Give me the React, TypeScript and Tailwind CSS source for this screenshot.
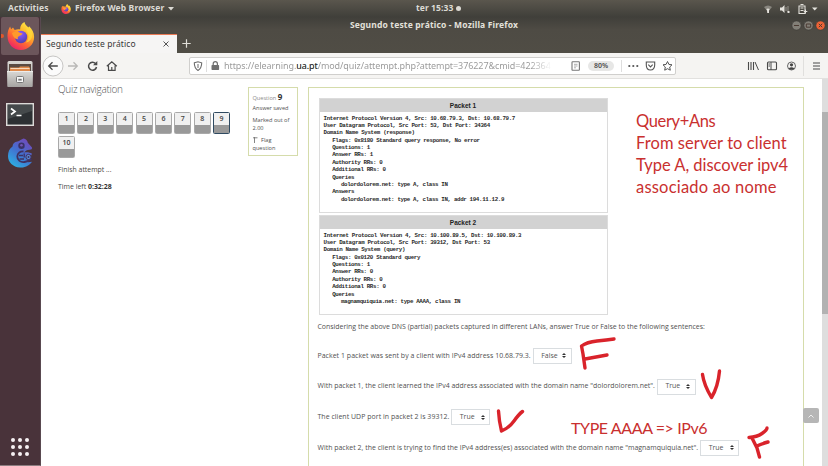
import React from "react";

const ui = "font-['Noto_Sans',sans-serif]";
const body = "font-['Open_Sans',sans-serif]";

function FirefoxLogo({ className }: { className: string }) {
  return (
    <svg className={className} viewBox="0 0 28 28">
      <defs>
        <linearGradient id="fxBody" x1="0.85" y1="0.05" x2="0.25" y2="0.95">
          <stop offset="0" stopColor="#fff04a" />
          <stop offset="0.35" stopColor="#ffb52a" />
          <stop offset="0.65" stopColor="#ff6a32" />
          <stop offset="1" stopColor="#ee2466" />
        </linearGradient>
        <radialGradient id="fxGlobe" cx="0.45" cy="0.25" r="0.8">
          <stop offset="0" stopColor="#9059ff" />
          <stop offset="1" stopColor="#4c3fa8" />
        </radialGradient>
      </defs>
      <path
        d="M1 14C1 10 2 7 3.600 4.600L4.600 7.200 6.500 5.600 8.200 8c2-1 4-1 5.400-.6C13.600 4 15 1.600 18 0c.4 2.500 2 3.800 4 5.500l.6-1.300C25.500 7 27.600 10.500 27.600 15 27.600 22.500 21.600 28 14.400 28 7 28 1 22.400 1 14z"
        fill="url(#fxBody)"
      />
      <circle cx="14.500" cy="15" r="6.200" fill="url(#fxGlobe)" />
      <path d="M5.500 11c2-1.500 5-2.200 7.500-.6 1.400.9 2.600.7 3.200 1.200-.8 1.600-2.600 2-4.200 2.800-1 .6-1 2-.2 2.800-3 .2-5.500-2.400-6.300-6.200z" fill="#ff9a2b" />
      <path d="M20 9c3 4 2.500 9-1 11.600 4.500-.6 7-4 6.600-8.600C25 9 22.500 6 20 4.500z" fill="#ffd83a" opacity=".75" />
    </svg>
  );
}

function FilesIcon() {
  return (
    <svg className="h-[28px] w-[28px]" viewBox="0 0 28 28">
      <defs>
        <linearGradient id="cab" x1="0" y1="0" x2="0" y2="1">
          <stop offset="0" stopColor="#d9d7d4" />
          <stop offset="1" stopColor="#a5a3a1" />
        </linearGradient>
      </defs>
      <rect x="1.500" y="1" width="25" height="26" rx="1.500" fill="url(#cab)" />
      <rect x="3" y="4" width="22" height="8" fill="#5b4a42" />
      <path d="M4 11V7.500h9l1-1h9l1 1.500v3z" fill="#e08a4c" />
      <path d="M4.500 8.500h19" stroke="#f7d9bd" strokeWidth="1" />
      <path d="M1 11.500h26l-.6 15.500H1.600z" fill="url(#cab)" />
      <path d="M1 11.500h26" stroke="#eeecea" />
      <rect x="10.500" y="16.500" width="7" height="6" rx="1" fill="#f6f6f6" stroke="#777" />
      <rect x="12.300" y="18.800" width="3.400" height="1.800" fill="#777" />
    </svg>
  );
}

function TerminalIcon() {
  return (
    <svg className="h-[23px] w-[28px]" viewBox="0 0 28 23">
      <rect x=".7" y=".7" width="26.600" height="21.600" fill="#2d3033" stroke="#dcdad8" strokeWidth="1.500" />
      <path d="M2 2h24v6L2 16z" fill="#45494b" />
      <path d="M5 5.500l4 3-4 3" fill="none" stroke="#fff" strokeWidth="1.700" />
      <path d="M10.500 12.500h5" stroke="#fff" strokeWidth="1.500" />
    </svg>
  );
}

function ChameleonIcon() {
  return (
    <svg className="h-[30px] w-[26px]" viewBox="0 0 26 30">
      <defs>
        <linearGradient id="cham" x1=".8" y1="0" x2=".2" y2="1">
          <stop offset="0" stopColor="#7447b8" />
          <stop offset=".5" stopColor="#4271d0" />
          <stop offset="1" stopColor="#2bb4e4" />
        </linearGradient>
      </defs>
      <path
        d="M16.500.5c2.500.5 4 2 4.300 4.300L25 9.500c.3 1.500-.8 2.300-2.500 2.200-2.500.3-4.200 1-5.500 2.800 3-.7 6-.2 8 1.200l-1 2-2-.5-1 7 4-.5C22.500 27 18.500 30 13 29.500 6 29 1 24.500 1 18c0-4.500 1.500-7.500 4.500-9.500.3-3 2-4.700 5-5 2-.3 4-2.500 6-3z"
        fill="url(#cham)"
      />
      <circle cx="14.500" cy="7.800" r="3.200" fill="#3b3268" />
      <circle cx="14.500" cy="7.300" r="1.300" fill="#7355b6" />
      <path d="M16.500 13.500c-3-.5-6 1.500-6.200 4.700-.2 4 3.500 6.500 7.200 5.800 2.500-.4 5-1.500 7-3" fill="none" stroke="#3f3162" strokeWidth="1.800" />
      <path d="M12 17.500h4M12.500 21h4.500M17.200 15.500v4" fill="none" stroke="#3f3162" strokeWidth="1.300" />
      <circle cx="21.500" cy="19" r="2.600" fill="#5b8bd4" stroke="#3f3162" />
      <circle cx="21.500" cy="19" r="1" fill="#3f3162" />
    </svg>
  );
}

function TopBar() {
  return (
    <div className={`flex h-[17px] shrink-0 items-center bg-gradient-to-b from-[#5a564d] to-[#403f3a] text-[8.5px] font-bold leading-none text-[#dcdad4] ${ui}`}>
      <div className="w-[61px] pl-[8px] tracking-[0.11px]">Activities</div>
      <FirefoxLogo className="h-[10px] w-[10px] shrink-0" />
      <div className="w-[97px] whitespace-nowrap pl-[4px] tracking-[0.12px]">Firefox Web Browser</div>
      <svg className="h-[4px] w-[6px]" viewBox="0 0 6 4"><path d="M0 0h6L3 3.500z" fill="#dcdad4" /></svg>
      <div className="ml-[242px] w-[40px] whitespace-nowrap tracking-[0.08px]">ter 15:33</div>
      <div className="h-[5px] w-[5px] rounded-full bg-[#dcdad4]" />
      <div className="flex-1" />
      <svg className="mr-[10px] h-[12px] w-[54px]" viewBox="0 0 54 12">
        <path d="M0 4q4-3 8 0L4 9z" fill="#89867f" />
        <path d="M2.300 6q1.700-1 3.400 0L4 9z" fill="#e4e2dc" />
        <rect x="3.200" y="6" width="1.800" height="4" fill="#e4e2dc" />
        <path d="M16 4.500h2L20.500 2v8L18 7.500h-2z" fill="#e4e2dc" />
        <path d="M22 4v4M24 3v6" stroke="#98958e" />
        <rect x="23.500" y="8" width="2" height="2" fill="#e4e2dc" />
        <path d="M35 3h6v7.500h-6zM36.500 1.500h3M36.500 5h3M36.500 7.500h3" fill="none" stroke="#e4e2dc" strokeWidth="1.100" />
        <path d="M41.500 6.500v4M39.800 8.500h3.500" stroke="#e4e2dc" />
        <path d="M48 4.500h5.500L50.700 7.500z" fill="#e4e2dc" />
      </svg>
    </div>
  );
}

function Dock() {
  return (
    <div className="flex w-[41px] shrink-0 flex-col items-center border-b border-r border-b-[#8b7d80] border-r-[#594950] bg-[#49333a]">
      <div className="flex h-[38px] w-[38px] items-center rounded-[2px] bg-[#6c565b]">
        <div className="h-[4px] w-[3px] rounded-r-full bg-[#e0562c]" />
        <FirefoxLogo className="ml-[2px] h-[28px] w-[29px]" />
      </div>
      <div className="mt-[5px]"><FilesIcon /></div>
      <div className="mt-[15px]"><TerminalIcon /></div>
      <div className="mt-[12px]"><ChameleonIcon /></div>
      <div className="mb-[9px] mt-auto grid grid-cols-3 gap-[3.2px]">
        {Array.from({ length: 9 }, (_, i) => (
          <div key={i} className="h-[4px] w-[4px] rounded-full bg-[#f6f1f2]" />
        ))}
      </div>
    </div>
  );
}

function TitleAndTabs() {
  return (
    <div className={`shrink-0 bg-gradient-to-b from-[#403f3a] via-[#4e4b44] via-35% to-[#504d45] ${ui}`}>
      <div className="flex h-[17px] items-center text-[8.5px] font-bold leading-none text-[#e3e1db]">
        <div className="w-[309px]" />
        <div className="w-[180px] whitespace-nowrap tracking-[0.16px]">Segundo teste prático - Mozilla Firefox</div>
        <div className="flex-1" />
        <svg className="mr-[2px] h-[12px] w-[36px]" viewBox="0 0 36 12">
          <circle cx="6.500" cy="5.500" r="4.600" fill="#827f77" stroke="#3b3935" strokeWidth=".6" />
          <circle cx="18.500" cy="5.500" r="4.600" fill="#827f77" stroke="#3b3935" strokeWidth=".6" />
          <circle cx="30.500" cy="5.500" r="4.600" fill="#ed6336" stroke="#3b3935" strokeWidth=".6" />
          <path d="M4 5.500h5M16.300 4h4.400v3.200h-4.400zM28.800 3.800l3.400 3.400M32.200 3.800l-3.400 3.400" fill="none" stroke="#4b3b33" />
        </svg>
      </div>
      <div className="flex h-[19px] items-center">
        <div className="flex h-full w-[136px] items-center border-t border-t-[#ea7a55] bg-[#f6f5f4] pl-[5px] text-[8.5px] leading-none text-[#383838]">
          <div className="w-[117px] whitespace-nowrap tracking-[0.1px]">Segundo teste prático</div>
          <svg className="h-[6px] w-[6px]" viewBox="0 0 6 6"><path d="M.5.5l5 5M5.500.5l-5 5" stroke="#555" strokeWidth="1" /></svg>
        </div>
        <svg className="ml-[5px] h-[9px] w-[9px]" viewBox="0 0 9 9"><path d="M4.500.3v8.400M.3 4.500h8.400" stroke="#e0ded8" strokeWidth="1.200" /></svg>
      </div>
    </div>
  );
}

function Toolbar() {
  return (
    <div className={`flex h-[26px] shrink-0 items-center border-b border-[#e2e1df] bg-[#f5f4f2] ${ui}`}>
      <svg className="h-[24px] w-[80px] shrink-0" viewBox="0 0 80 24" fill="none" stroke="#4a4a4a" strokeWidth="1.300">
        <circle cx="12" cy="12" r="10" fill="#fbfbfb" stroke="#bab9b7" strokeWidth=".8" />
        <path d="M16.800 12H8M11.500 8.200L7.700 12l3.800 3.800" />
        <path d="M27 12h9M32.500 8.200l3.800 3.800-3.800 3.800" stroke="#b9b8b6" />
        <path d="M54.500 9.500A4 4 0 1 0 55.500 13" strokeWidth="1.500" />
        <path d="M56.300 7v4.300H52z" fill="#4a4a4a" stroke="none" />
        <path d="M65.800 12.300l5-4.600 5 4.600M67.500 11.500v4.800h6.600v-4.800M70.800 16v-3" strokeWidth="1.200" />
      </svg>
      <div className="ml-[68px] flex h-[18px] w-[487px] shrink-0 items-center rounded-[2px] border border-[#d0cfcd] bg-white">
        <svg className="ml-[3px] h-[14px] w-[28px] shrink-0" viewBox="0 0 28 14">
          <path d="M1.300 3.800L5 2.700l3.700 1.100c0 4-.8 6-3.700 7.600C2.100 9.800 1.300 7.800 1.300 3.800z" fill="none" stroke="#6b6b6b" strokeWidth="1.100" />
          <path d="M5 5v4" stroke="#6b6b6b" />
          <path d="M13.500 1v12" stroke="#dedede" />
          <rect x="18.500" y="6" width="7.600" height="5" rx=".7" fill="#707070" />
          <path d="M20.200 6V4.800a2.100 2.100 0 0 1 4.200 0V6" fill="none" stroke="#707070" strokeWidth="1.200" />
        </svg>
        <div className="ml-[3px] w-[328px] whitespace-nowrap bg-gradient-to-r from-[#969696] from-93% to-[#ffffff] bg-clip-text text-[9px] leading-[14px] tracking-[-0.08px] text-transparent">
          https://elearning.<span className="text-[#2f2f2f]">ua.pt</span>/mod/quiz/attempt.php?attempt=376227&amp;cmid=422364
        </div>
        <svg className="ml-[19px] h-[12px] w-[10px] shrink-0" viewBox="0 0 10 12">
          <rect x="1" y="1.800" width="7.400" height="8.500" rx=".6" fill="none" stroke="#777" strokeWidth="1.100" />
          <path d="M3 4.300h3.500M3 6h3.500M3 7.800h2" stroke="#999" strokeWidth=".8" />
        </svg>
        <div className="ml-[7px] flex h-[10px] w-[26px] shrink-0 items-center justify-center rounded-full bg-[#e7e7e6] text-[7px] font-semibold leading-none text-[#4d4d4d]">80%</div>
        <svg className="ml-[6px] h-[14px] w-[54px] shrink-0" viewBox="0 0 54 14">
          <path d="M1.500 1v12" stroke="#dedede" />
          <circle cx="9.300" cy="7" r="1.100" fill="#555" /><circle cx="13.300" cy="7" r="1.100" fill="#555" /><circle cx="17.300" cy="7" r="1.100" fill="#555" />
          <path d="M26.300 3h8.400v3c0 3-1.500 5-4.200 5s-4.200-2-4.200-5z" fill="none" stroke="#555" strokeWidth="1.100" />
          <path d="M28.300 5.700l2.200 2.200 2.200-2.200" fill="none" stroke="#555" strokeWidth="1.100" />
          <path d="M47.500 2.500l1.400 2.900 3.100.4-2.300 2.200.6 3.200-2.800-1.500-2.800 1.500.6-3.200L43 5.800l3.100-.4z" fill="none" stroke="#555" />
        </svg>
      </div>
      <div className="flex-1" />
      <svg className="mr-[6px] h-[24px] w-[76px] shrink-0" viewBox="0 0 76 24" fill="none" stroke="#4a4a4a">
        <path d="M2.500 8v8M5 8v8M7.500 8v8" strokeWidth="1.100" /><path d="M9 8l3.500 8" />
        <rect x="21.500" y="8" width="9" height="7.800" rx="1" strokeWidth="1.100" /><path d="M25 8v8M22.500 10h1.500M22.500 12h1.500" />
        <circle cx="45.500" cy="12" r="4" stroke="#666" /><circle cx="45.500" cy="10.800" r="1.600" fill="#444" stroke="none" /><path d="M42.500 14.500q3-2.500 6 0-3 2.500-6 0z" fill="#444" stroke="none" />
        <path d="M57.500 2v20" stroke="#e0dfdd" />
        <path d="M67 9h7M67 12h7M67 15h7" strokeWidth="1.100" />
      </svg>
    </div>
  );
}

function QuizNav() {
  return (
    <div className={`w-[207px] shrink-0 pl-[17px] text-[#484848] ${body}`}>
      <div className="mt-[3px] h-[15px] whitespace-nowrap text-[10px] font-light leading-[15px] tracking-[-0.28px] text-[#555]">Quiz navigation</div>
      <div className="mt-[15px] flex flex-wrap gap-x-[2.4px] gap-y-[2.500px]">
        {[1, 2, 3, 4, 5, 6, 7, 8, 9, 10].map((n) => (
          <div
            key={n}
            className={`flex h-[21.500px] w-[17px] flex-col overflow-hidden rounded-[1.500px] border ${n === 9 ? "border-[#2f4a61]" : "border-[#a9a9a9]"}`}
          >
            <div className="h-[11.500px] bg-[#f0f0f0] text-center text-[7px] font-semibold leading-[11px] text-[#444]">{n}</div>
            <div className="flex-1 bg-[#999]" />
          </div>
        ))}
      </div>
      <div className="mt-[6px] text-[6.900px] leading-[11px] text-[#4a4640]">Finish attempt ...</div>
      <div className="mt-[6px] text-[6.950px] leading-[11px]">Time left <b className="font-bold text-[#333]">0:32:28</b></div>
    </div>
  );
}

function QuestionInfo() {
  return (
    <div className={`mt-[8px] h-[69px] w-[50px] shrink-0 border border-[#d5dcab] pl-[3.500px] text-[5.600px] leading-[8.500px] text-[#505050] ${body}`}>
      <div className="mt-[3px] h-[11px] leading-[11px] text-[#8a8a8a]">Question <b className="text-[8px] text-[#333]">9</b></div>
      <div className="mt-[2px] whitespace-nowrap">Answer saved</div>
      <div className="mt-[3px] whitespace-nowrap">Marked out of<br />2.00</div>
      <div className="mt-[3px] flex items-center">
        <svg className="mr-[3.500px] h-[6px] w-[5px]" viewBox="0 0 5 6"><path d="M1.500 0v6M0 .8h4.500" stroke="#777" fill="none" strokeWidth=".9" /></svg>
        Flag
      </div>
      <div>question</div>
    </div>
  );
}

type Line = [number, string];

const packet1: Line[] = [
  [0, "Internet Protocol Version 4, Src: 10.68.79.3, Dst: 10.68.79.7"],
  [0, "User Datagram Protocol, Src Port: 53, Dst Port: 34364"],
  [0, "Domain Name System (response)"],
  [1, "Flags: 0x8180 Standard query response, No error"],
  [1, "Questions: 1"],
  [1, "Answer RRs: 1"],
  [1, "Authority RRs: 0"],
  [1, "Additional RRs: 0"],
  [1, "Queries"],
  [2, "dolordolorem.net: type A, class IN"],
  [1, "Answers"],
  [2, "dolordolorem.net: type A, class IN, addr 194.11.12.9"],
];

const packet2: Line[] = [
  [0, "Internet Protocol Version 4, Src: 10.100.89.5, Dst: 10.100.89.3"],
  [0, "User Datagram Protocol, Src Port: 39312, Dst Port: 53"],
  [0, "Domain Name System (query)"],
  [1, "Flags: 0x0120 Standard query"],
  [1, "Questions: 1"],
  [1, "Answer RRs: 0"],
  [1, "Authority RRs: 0"],
  [1, "Additional RRs: 0"],
  [1, "Queries"],
  [2, "magnamquiquia.net: type AAAA, class IN"],
];

const indents = ["", "pl-[8.700px]", "pl-[17.400px]"];

function Packet({ title, lines, height }: { title: string; lines: Line[]; height: string }) {
  return (
    <div className={`w-[289px] border border-[#dcdcdc] ${height}`}>
      <div className="h-[13px] bg-[#d2d2d2] text-center font-['Liberation_Sans',sans-serif] text-[6.500px] font-bold leading-[13px] text-[#222]">{title}</div>
      <div className="pl-[4px] pt-[2.500px] font-['Liberation_Mono',monospace] text-[5.800px] font-bold leading-[7.370px] tracking-[-0.34px] text-[#2a2a2a]">
        {lines.map(([level, text], i) => (
          <div key={i} className={`whitespace-nowrap ${indents[level]}`}>{text}</div>
        ))}
      </div>
    </div>
  );
}

function Statement({ text, value, spacing }: { text: string; value: string; spacing: string }) {
  return (
    <div className="flex h-[30.700px] items-center whitespace-nowrap">
      <span className={spacing}>{text}</span>
      <div className="ml-[2px] flex h-[16px] w-[39px] items-center border border-[#d9dde0] pl-[7.500px] text-[#555]">
        <span className="w-[21px]">{value}</span>
        <svg className="h-[5px] w-[4px]" viewBox="0 0 4 5"><path d="M0 2l2-2 2 2zM0 3l2 2 2-2z" fill="#333" /></svg>
      </div>
    </div>
  );
}

function Annotations() {
  return (
    <>
      <div className="absolute left-[636px] top-[110px] whitespace-nowrap font-['Lato',sans-serif] text-[16.500px] leading-[22px] text-[#c9302f]">
        <div className="tracking-[-0.35px]">Query+Ans</div>
        <div className="tracking-[0.08px]">From server to client</div>
        <div className="tracking-[-0.03px]">Type A, discover ipv4</div>
        <div className="tracking-[0.2px]">associado ao nome</div>
      </div>
      <div className="absolute left-[571px] top-[417px] whitespace-nowrap font-['Lato',sans-serif] text-[16px] leading-[22px] tracking-[-0.4px] text-[#c9302f]">
        TYPE AAAA =&gt; IPv6
      </div>
      <svg className="absolute left-0 top-0 h-[466px] w-[828px]" viewBox="0 0 828 466" fill="none" stroke="#d9232b" strokeWidth="3.400" strokeLinecap="round" strokeLinejoin="round">
        <path d="M585 368L583 354L581.500 346Q587 342 597 341T614 339M585 359Q596 357 607 355" />
        <path d="M702.500 374.500Q704 385 711.500 397.500Q718 387 719.500 371" />
        <path d="M498.500 411Q499 421 501.500 431Q509 428 514 421T522.500 411.500" />
        <path d="M749 437.500Q757 437 762 433.500T767 428M752 438L757 448L759.500 457M757 446Q761 444 768 442" />
      </svg>
    </>
  );
}

export default function App() {
  return (
    <div className="relative flex h-[466px] w-[828px] flex-col overflow-hidden bg-white">
      <TopBar />
      <div className="flex min-h-0 flex-1">
        <Dock />
        <div className="flex min-w-0 flex-1 flex-col">
          <TitleAndTabs />
          <Toolbar />
          <div className="flex min-h-0 flex-1 overflow-hidden">
            <QuizNav />
            <QuestionInfo />
            <div className={`ml-[10px] mt-[8px] h-[400px] w-[496px] shrink-0 border border-[#d5dcab] pl-[8.500px] text-[6.950px] text-[#505050] ${body}`}>
              <div className="mt-[10px] space-y-[2px] pl-[1px]">
                <Packet title="Packet 1" lines={packet1} height="h-[115px]" />
                <Packet title="Packet 2" lines={packet2} height="h-[100px]" />
              </div>
              <div className="mt-[7px] h-[10px] whitespace-nowrap leading-[10px]">
                Considering the above DNS (partial) packets captured in different LANs, answer True or False to the following sentences:
              </div>
              <div className="mt-[8.500px]">
                <Statement text="Packet 1 packet was sent by a client with IPv4 address 10.68.79.3." value="False" spacing="tracking-[0.045px]" />
                <Statement text={'With packet 1, the client learned the IPv4 address associated with the domain name "dolordolorem.net".'} value="True" spacing="tracking-[0.012px]" />
                <Statement text="The client UDP port in packet 2 is 39312." value="True" spacing="tracking-[0.045px]" />
                <Statement text={'With packet 2, the client is trying to find the IPv4 address(es) associated with the domain name "magnamquiquia.net".'} value="True" spacing="tracking-[0.012px]" />
              </div>
            </div>
            <div className="flex-1" />
            <div className="w-[6px] shrink-0 bg-[#dedede] pt-[33px]">
              <div className="h-[202px] bg-[#b2b2b2]" />
            </div>
          </div>
        </div>
      </div>
      <div className="absolute left-[803px] top-[408px] flex h-[15px] w-[16px] items-center justify-center rounded-[2px] bg-[#b6b6b6]">
        <svg className="h-[4px] w-[6px]" viewBox="0 0 6 4"><path d="M.5 3.500L3 1l2.500 2.500" fill="none" stroke="#eee" /></svg>
      </div>
      <Annotations />
    </div>
  );
}
